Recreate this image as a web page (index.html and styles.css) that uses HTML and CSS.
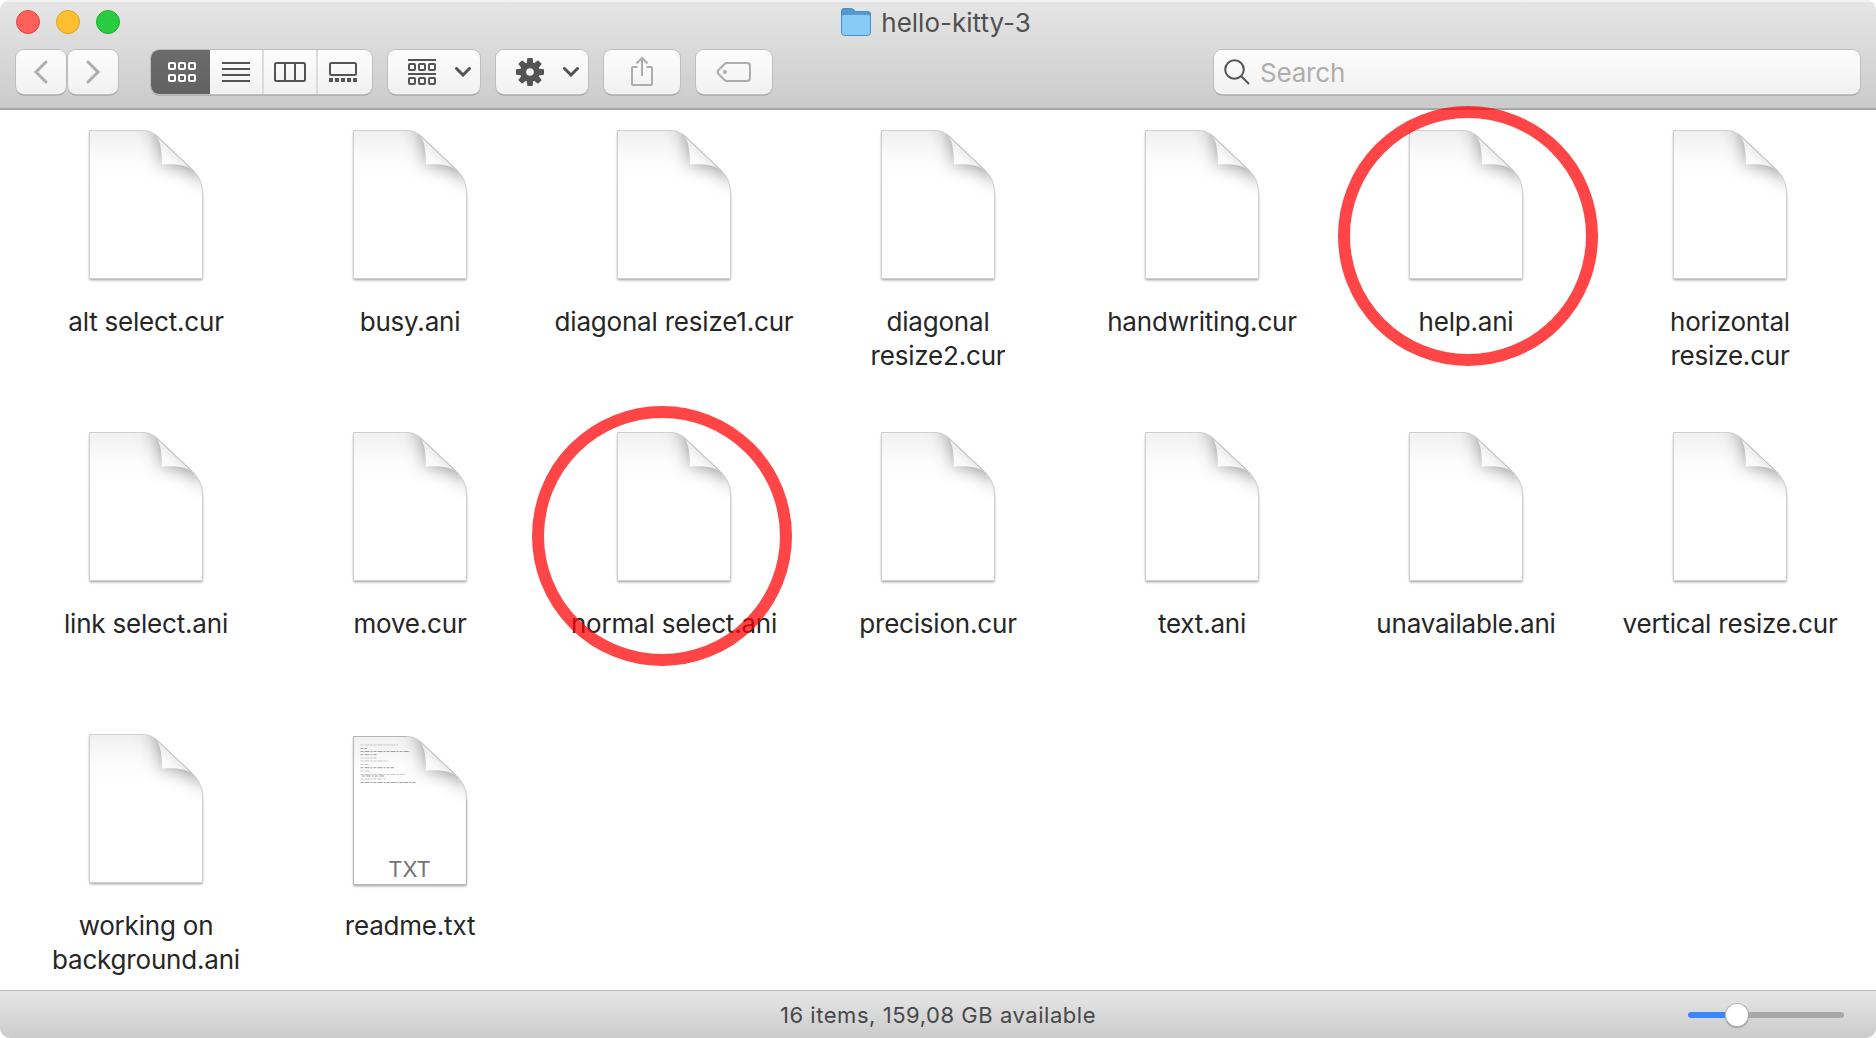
FILE: index.html
```
<!DOCTYPE html>
<html lang="en">
<head>
<meta charset="utf-8">
<title>hello-kitty-3</title>
<link rel="stylesheet" href="styles.css">
</head>
<body>
<svg class="defs" width="0" height="0" aria-hidden="true">
  <defs>
    <linearGradient id="paper" x1="0" y1="0" x2="0" y2="1">
      <stop offset="0" stop-color="#f0f0f0"/><stop offset=".2" stop-color="#fcfcfc"/><stop offset=".35" stop-color="#fff"/>
    </linearGradient>
    <linearGradient id="flap" x1="0" y1="1" x2=".55" y2=".45">
      <stop offset="0" stop-color="#fff"/><stop offset=".6" stop-color="#fafafa"/><stop offset="1" stop-color="#e6e6e6"/>
    </linearGradient>
    <filter id="soft" x="-50%" y="-50%" width="200%" height="200%"><feGaussianBlur stdDeviation="9"/></filter>
    <filter id="drop" x="-10%" y="-10%" width="120%" height="120%"><feDropShadow dx="0" dy="1.6" stdDeviation="1.3" flood-color="#000" flood-opacity=".38"/></filter>
    <clipPath id="sheet"><path d="M5.5 3.5H59C64 3.5 69 5.5 73 9L108 42C115 49 118.5 57 118.5 67V151.5H5.5Z"/></clipPath>
    <symbol id="doc" viewBox="0 0 124 160">
      <path filter="url(#drop)" fill="#fff" d="M5.5 3.5H59C64 3.5 69 5.5 73 9L108 42C115 49 118.5 57 118.5 67V151.5H5.5Z"/>
      <g clip-path="url(#sheet)">
        <path fill="url(#paper)" d="M5 3h114v149H5z"/>
        <path filter="url(#soft)" fill="#000" fill-opacity=".42" d="M62 -1C74 5 78 15 78 37C96 37 108 40 122 58V-1Z"/>
      </g>
      <path fill="none" stroke="#cdcfce" d="M5.5 3.5H59C64 3.5 69 5.5 73 9L108 42C115 49 118.5 57 118.5 67V151.5H5.5Z"/>
      <path fill="url(#flap)" d="M71.5 8C76 13 78 21 78 37.5C92 36.500 101 38 107.500 42Z"/>
      <path fill="none" stroke="#c2c2c2" stroke-width="1" d="M71.500 8L107.500 42"/>
    </symbol>
  </defs>
</svg>
<div class="window">
  <header class="titlebar">
    <div class="title-row">
      <div class="lights"><i class="light close"></i><i class="light minimize"></i><i class="light zoom"></i></div>
      <div class="title">
        <svg width="30" height="28" viewBox="0 0 30 28"><path d="M.5 24V3Q.5 .5 3 .5H10Q11.5 .5 13 2L14.500 3.500H27Q29.500 3.500 29.500 6V24Q29.500 27.500 26 27.500H4Q.5 27.500 .5 24Z" fill="#5499cc" stroke="#4690c8"/><path d="M1 9Q1 7 3 7H27Q29 7 29 9V24Q29 27 26 27H4Q1 27 1 24Z" fill="#89cbf7"/></svg>
        <span class="name">hello-kitty-3</span>
      </div>
    </div>
    <div class="toolbar">
      <div class="nav">
        <div class="button"><svg width="50" height="44" viewBox="0 0 50 44"><path d="M30 12L20 22L30 32" class="stroke pale"/></svg></div>
        <div class="button"><svg width="50" height="44" viewBox="0 0 50 44"><path d="M20 12L30 22L20 32" class="stroke pale"/></svg></div>
      </div>
      <div class="views button">
        <div class="view active"><svg width="28" height="20" viewBox="0 0 28 20" class="line"><rect x="1" y="1" width="6" height="6" rx="1"/><rect x="11" y="1" width="6" height="6" rx="1"/><rect x="21" y="1" width="6" height="6" rx="1"/><rect x="1" y="13" width="6" height="6" rx="1"/><rect x="11" y="13" width="6" height="6" rx="1"/><rect x="21" y="13" width="6" height="6" rx="1"/></svg></div>
        <div class="view"><svg width="28" height="20" viewBox="0 0 28 20" class="line"><path d="M0 1H28M0 7H28M0 13H28M0 19H28"/></svg></div>
        <div class="view"><svg width="32" height="20" viewBox="0 0 32 20" class="line"><rect x="1" y="1" width="30" height="18" rx="1.500"/><path d="M11 1V19M21 1V19"/></svg></div>
        <div class="view"><svg width="28" height="20" viewBox="0 0 28 20" class="line"><rect x="1" y="1" width="26" height="12" rx="1.500"/><path class="dots" d="M0 16h4v4H0zM6 16h4v4H6zM12 16h4v4h-4zM18 16h4v4h-4zM24 16h4v4h-4z"/></svg></div>
      </div>
      <div class="button menu">
        <svg width="28" height="26" viewBox="0 0 28 26" class="line"><path d="M0 1H28M0 15H28"/><rect x="1" y="5" width="6" height="6" rx="1"/><rect x="11" y="5" width="6" height="6" rx="1"/><rect x="21" y="5" width="6" height="6" rx="1"/><rect x="1" y="19" width="6" height="6" rx="1"/><rect x="11" y="19" width="6" height="6" rx="1"/><rect x="21" y="19" width="6" height="6" rx="1"/></svg>
        <svg width="16" height="10" viewBox="0 0 16 10"><path class="stroke" d="M1.500 1.500L8 8L14.500 1.500"/></svg>
      </div>
      <div class="button menu">
        <svg width="28" height="28" viewBox="-14 -14 28 28"><g fill="#545454"><path id="tooth" d="M-2.700-13.500Q-2.600-14-2-14H2Q2.600-14 2.700-13.500L3.400-8H-3.400Z"/><use href="#tooth" transform="rotate(45)"/><use href="#tooth" transform="rotate(90)"/><use href="#tooth" transform="rotate(135)"/><use href="#tooth" transform="rotate(180)"/><use href="#tooth" transform="rotate(225)"/><use href="#tooth" transform="rotate(270)"/><use href="#tooth" transform="rotate(315)"/></g><circle r="6.800" fill="none" stroke="#545454" stroke-width="6"/></svg>
        <svg width="16" height="10" viewBox="0 0 16 10"><path class="stroke" d="M1.500 1.500L8 8L14.500 1.500"/></svg>
      </div>
      <div class="button single"><svg width="76" height="44" viewBox="0 0 76 44"><path class="line pale" d="M33.500 17H29Q28 17 28 18V34Q28 35 29 35H47Q48 35 48 34V18Q48 17 47 17H42.500M38 26V8M32.500 13.500L38 8L43.500 13.500"/></svg></div>
      <div class="button single"><svg width="76" height="44" viewBox="0 0 76 44"><path class="line pale" d="M31 13H51Q54 13 54 16V28Q54 31 51 31H31Q29.500 31 28.500 30L22.500 24Q20.800 22 22.500 20L28.500 14Q29.500 13 31 13Z"/><circle cx="29" cy="22" r="2" fill="#adadad"/></svg></div>
      <div class="search button">
        <svg width="26" height="26" viewBox="0 0 26 26" fill="none" stroke="#545454" stroke-width="2"><circle cx="10.500" cy="10.500" r="9.300"/><path d="M17 17L25 25"/></svg>
        <span class="placeholder">Search</span>
      </div>
    </div>
  </header>
  <main class="files">
    <div class="file"><svg class="icon"><use href="#doc"/></svg><div class="label">alt select.cur</div></div>
    <div class="file"><svg class="icon"><use href="#doc"/></svg><div class="label">busy.ani</div></div>
    <div class="file"><svg class="icon"><use href="#doc"/></svg><div class="label">diagonal resize1.cur</div></div>
    <div class="file"><svg class="icon"><use href="#doc"/></svg><div class="label">diagonal<br>resize2.cur</div></div>
    <div class="file"><svg class="icon"><use href="#doc"/></svg><div class="label">handwriting.cur</div></div>
    <div class="file"><svg class="icon"><use href="#doc"/></svg><div class="label">help.ani</div></div>
    <div class="file"><svg class="icon"><use href="#doc"/></svg><div class="label">horizontal<br>resize.cur</div></div>
    <div class="file"><svg class="icon"><use href="#doc"/></svg><div class="label">link select.ani</div></div>
    <div class="file"><svg class="icon"><use href="#doc"/></svg><div class="label">move.cur</div></div>
    <div class="file"><svg class="icon"><use href="#doc"/></svg><div class="label">normal select.ani</div></div>
    <div class="file"><svg class="icon"><use href="#doc"/></svg><div class="label">precision.cur</div></div>
    <div class="file"><svg class="icon"><use href="#doc"/></svg><div class="label">text.ani</div></div>
    <div class="file"><svg class="icon"><use href="#doc"/></svg><div class="label">unavailable.ani</div></div>
    <div class="file"><svg class="icon"><use href="#doc"/></svg><div class="label">vertical resize.cur</div></div>
    <div class="file"><svg class="icon"><use href="#doc"/></svg><div class="label">working on<br>background.ani</div></div>
    <div class="file">
      <svg class="icon" viewBox="0 -2 124 160"><use href="#doc" width="124" height="160"/><path fill="none" stroke="#b5b5b5" d="M59 3.500H5.500V151.500H118.500V67"/>
        <path class="preview" d="M12.500 12H50M12.500 25H29M12.500 28H40M12.500 31.500H20.500M12.500 38H23M12.500 41.500H57M12.500 46H37.500"/>
        <path class="preview dark" d="M12.500 15.500H19M12.500 18.500H62M12.500 21.700H29.500M12.500 34.700H46M14 43H37M12.500 49.500H68"/>
        <text x="61.500" y="144" class="kind">TXT</text></svg>
      <div class="label">readme.txt</div>
    </div>
  </main>
  <footer class="status">
    <span class="summary">16 items, 159,08 GB available</span>
    <div class="slider"><div class="fill"></div><div class="knob"></div><div class="rest"></div></div>
  </footer>
  <div class="ring help"></div>
  <div class="ring normal"></div>
</div>
</body>
</html>
```
FILE: styles.css
```
* { box-sizing: border-box; }
body { margin: 0; background: #fff; font-family: Inter, "Liberation Sans", sans-serif; color: #262626; }
.defs { position: absolute; }
.window { position: relative; width: 1876px; height: 1038px; display: flex; flex-direction: column; border-radius: 10px; overflow: hidden; background: #fff; }
.titlebar { height: 110px; flex: none; background: linear-gradient(#e6e6e6, #cbcbcb); border-bottom: 2px solid #a6a6a6; box-shadow: inset 0 2px #f3f3f3; }
.title-row { height: 50px; display: grid; grid-template-columns: 1fr auto 1fr; padding: 0 20px 0 16px; }
.lights { display: flex; gap: 16px; padding-top: 10px; }
.light { width: 24px; height: 24px; border-radius: 50%; border: 1px solid; }
.close { background: #ff6059; border-color: #e2463f; }
.minimize { background: #ffbf2f; border-color: #dfa023; }
.zoom { background: #29cb41; border-color: #1dad2b; }
.title { display: flex; gap: 10px; padding-top: 8px; }
.name { font-size: 26px; line-height: 30px; color: #505050; white-space: nowrap; }
.toolbar { display: flex; gap: 16px; padding: 0 16px; height: 44px; }
.button { height: 44px; border-radius: 8px; background: linear-gradient(#fdfdfd, #f1f1f1); box-shadow: 0 0 0 1px #bdbdbd, 0 1.500px 0 #959595; }
.button svg { display: block; }
.nav { display: flex; gap: 2px; margin-right: 17px; }
.nav .button { width: 50px; }
.stroke { fill: none; stroke: #545454; stroke-width: 3; stroke-linecap: round; stroke-linejoin: miter; }
.line { fill: none; stroke: #545454; stroke-width: 2; }
.stroke.pale, .line.pale { stroke: #adadad; }
.line .dots { fill: #545454; stroke: none; }
.views { display: grid; grid-template-columns: 59px 52px 54px 56px; overflow: hidden; }
.view { display: flex; align-items: center; justify-content: center; }
.view + .view + .view { border-left: 2px solid #dcdcdc; }
.view:last-child { padding-right: 4px; }
.active { background: linear-gradient(#6b6b6b, #626262); padding-left: 3px; }
.active .line { stroke: #fff; }
.menu { width: 92px; display: flex; align-items: center; gap: 19px; padding-left: 20px; }
.single { width: 76px; }
.search { margin-left: auto; width: 646px; display: flex; align-items: center; padding-left: 10px; gap: 10px; }
.placeholder { font-size: 26px; line-height: 32px; letter-spacing: -.2px; padding-top: 1px; color: #adadad; }
.files { height: 880px; flex: none; display: grid; grid-template-columns: repeat(7, 264px); grid-template-rows: repeat(3, 302px); padding: 17px 14px 0; }
.file { display: flex; flex-direction: column; align-items: center; }
.icon { width: 124px; height: 160px; flex: none; display: block; }
.label { margin-top: 18px; font-size: 26px; line-height: 34px; letter-spacing: -.2px; text-align: center; white-space: nowrap; }
.kind { font: 22px Inter, sans-serif; fill: #747474; text-anchor: middle; }
.preview { fill: none; stroke: #c4c4c4; stroke-width: 1; stroke-dasharray: 3 1 5 1 2 1; }
.preview.dark { stroke: #a0a0a0; }
.status { height: 48px; flex: none; display: grid; grid-template-columns: 1fr auto 1fr; align-items: center; background: linear-gradient(#e6e6e6, #cbcbcb); border-top: 1px solid #b5b5b5; padding: 0 32px; }
.summary { grid-column: 2; font-size: 22px; letter-spacing: .54px; color: #484848; white-space: nowrap; }
.slider { justify-self: end; width: 156px; display: flex; align-items: center; }
.fill { width: 38px; height: 6px; border-radius: 3px 0 0 3px; background: #3b87fd; }
.knob { width: 22px; height: 22px; border-radius: 50%; background: #fff; box-shadow: 0 0 0 1px #b8b8b8, 0 1px 1px 1px #999; }
.rest { flex: 1; height: 6px; border-radius: 0 3px 3px 0; background: #a8a8a8; }
.ring { position: absolute; width: 260px; height: 260px; border: 12px solid rgba(255, 0, 0, .73); border-radius: 50%; }
.help { left: 1338px; top: 106px; }
.normal { left: 532px; top: 406px; }
```
